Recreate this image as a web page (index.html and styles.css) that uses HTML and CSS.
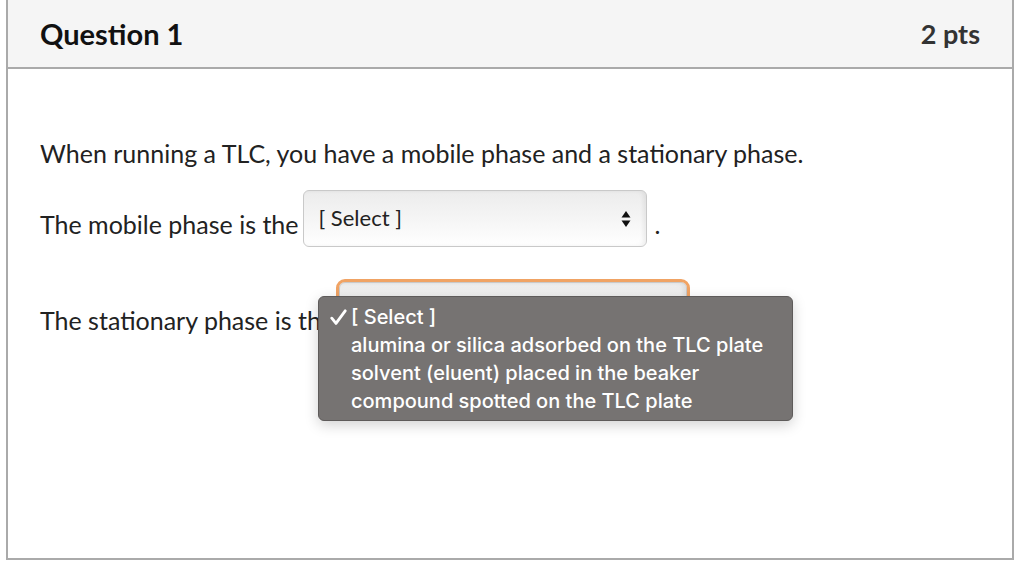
FILE: index.html
```html
<!DOCTYPE html>
<html lang="en">
<head>
    <meta charset="UTF-8">
    <meta name="viewport" content="width=device-width, initial-scale=1.0">
    <title>Question 1</title>
    <link rel="stylesheet" href="styles.css">
</head>
<body>
    <div class="question">
        <div class="question-header">
            <span class="question-name">Question 1</span>
            <span class="question-points">2 pts</span>
        </div>

        <div class="question-body">
            <p class="intro">When running a TLC, you have a mobile phase and a stationary phase.</p>

            <div class="row row-mobile">
                <span class="row-text">The mobile phase is the</span>
                <span class="select">
                    <span class="select-label">[ Select ]</span>
                    <svg class="select-arrows" width="10" height="18" viewBox="0 0 10 18">
                        <path d="M5 1 L9.5 7.5 H0.5 Z" fill="#111"/>
                        <path d="M5 17 L9.5 10.5 H0.5 Z" fill="#111"/>
                    </svg>
                </span>
                <span class="row-text dot">.</span>
            </div>

            <div class="row row-stationary">
                <span class="row-text">The stationary phase is the</span>
                <span class="select focused"></span>
            </div>
        </div>
    </div>

    <div class="menu">
        <div class="menu-item checked">
            <svg class="check" width="17" height="17" viewBox="0 0 17 17">
                <path d="M1.8 9.2 L6 14.4 L15.2 1.8" fill="none" stroke="#fff" stroke-width="2.8" stroke-linecap="round" stroke-linejoin="round"/>
            </svg>
            [ Select ]
        </div>
        <div class="menu-item">alumina or silica adsorbed on the TLC plate</div>
        <div class="menu-item">solvent (eluent) placed in the beaker</div>
        <div class="menu-item">compound spotted on the TLC plate</div>
    </div>
</body>
</html>
```

FILE: styles.css
```css
body {
    margin: 0;
    padding: 0;
    background-color: #fff;
    font-family: Lato, "Open Sans", sans-serif;
    color: #222;
}
.question {
    margin: 0 10px 0 6px;
    border: 2px solid #aaa;
    border-top: none;
}
.question-header {
    height: 69px;
    background-color: #f5f5f5;
    border-bottom: 2px solid #aaa;
    display: flex;
    justify-content: space-between;
    align-items: center;
    padding: 0 32px 0 32px;
    box-sizing: border-box;
}
.question-name {
    font-size: 29px;
    font-weight: bold;
    color: #111;
}
.question-points {
    font-size: 27px;
    font-weight: bold;
    color: #333;
}
.question-body {
    height: 489px;
    box-sizing: border-box;
    padding: 69px 32px 0 32px;
    font-size: 25px;
}
.intro {
    margin: 0;
    line-height: 30px;
}
.row {
    display: flex;
    align-items: flex-start;
}
.row-mobile {
    margin-top: 22px;
}
.row-mobile .row-text {
    padding-top: 19px;
    line-height: 30px;
}
.row-mobile .dot {
    padding-left: 8px;
}
.row-stationary {
    margin-top: 35px;
}
.row-stationary .row-text {
    padding-top: 23px;
    line-height: 30px;
}
.select {
    display: flex;
    align-items: center;
    justify-content: space-between;
    box-sizing: border-box;
    width: 344px;
    height: 57px;
    margin-left: 4px;
    padding: 0 15px 0 15px;
    border: 1px solid #c9c9c9;
    border-radius: 6px;
    background: linear-gradient(#ececec, #f6f6f6 55%, #fff);
    box-shadow: inset -3px 0 4px rgba(0, 0, 0, 0.06);
}
.select-label {
    font-size: 22px;
    color: #222;
    margin-top: -2px;
}
.select-arrows {
    margin-top: 1px;
}
.focused {
    width: 348px;
    margin-left: 5px;
    outline: 3px solid #f0a364;
    outline-offset: 0;
}
.menu {
    position: absolute;
    left: 318px;
    top: 296px;
    width: 475px;
    height: 125px;
    box-sizing: border-box;
    padding-top: 6px;
    background-color: #767372;
    border: 1px solid #5e5b5a;
    border-radius: 6px;
    box-shadow: 0 4px 14px rgba(0, 0, 0, 0.18);
    font-family: Inter, Roboto, sans-serif;
    font-weight: 500;
    font-size: 20px;
    color: #fff;
}
.menu-item {
    height: 28px;
    line-height: 28px;
    padding-left: 32px;
    position: relative;
    white-space: nowrap;
}
.check {
    position: absolute;
    left: 11px;
    top: 6px;
}
```
